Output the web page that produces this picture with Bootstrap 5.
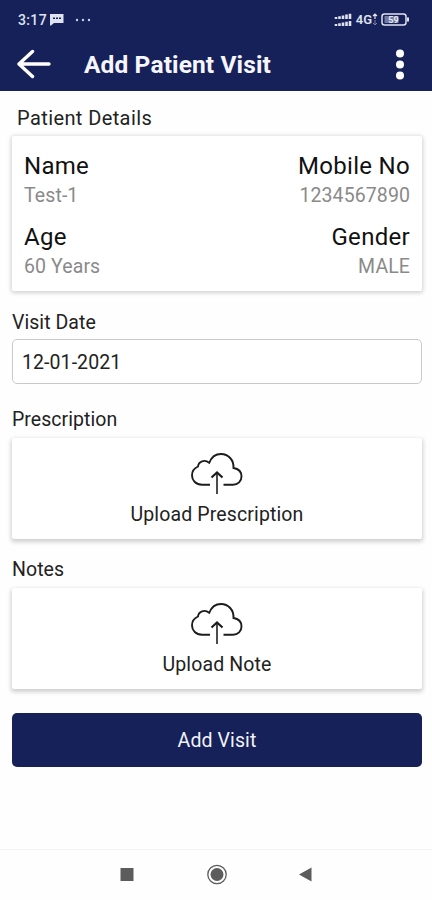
<!DOCTYPE html>
<html lang="en">
<head>
<meta charset="utf-8">
<meta name="viewport" content="width=device-width, initial-scale=1">
<title>Add Patient Visit</title>
<link href="https://cdn.jsdelivr.net/npm/bootstrap@5.3.0/dist/css/bootstrap.min.css" rel="stylesheet">
<style>
:root { --navy: #162159; }
body { font-family: Roboto, "Noto Sans", sans-serif; background: #fefefe; color: #222; font-size: 20px; line-height: 24px; }
.screen { width: 432px; height: 900px; }
.top-area { background: var(--navy); height: 91px; }
.status-row { height: 39px; padding: 0 22px 0 18px; }
.clock { font-size: 14px; font-weight: 500; line-height: 16px; letter-spacing: .35px; color: #dfe2ef; }
.notice { margin-left: 3px; }
.dots { margin-left: 11px; }
.battery { margin-left: 3px; }
.net { font-size: 13px; font-weight: 600; line-height: 16px; color: #dfe2ef; }
.app-row { height: 52px; padding: 0 28px 2px 17px; }
.app-title { font-size: 24.5px; font-weight: 700; line-height: 28px; letter-spacing: .12px; margin-left: 33px; padding-top: 1px; color: #f6f6fa; }
.icon-btn { line-height: 0; }
.content { padding: 15px 10px 0 12px; }
.section-label { font-size: 19.5px; letter-spacing: .05px; }
.details-label { font-size: 20px; letter-spacing: .4px; padding-left: 5px; }
.date-label { margin-top: 20px; }
.upload-label { margin-top: 24px; }
.notes-label { margin-top: 19px; }
.panel { background: #fff; box-shadow: 0 2px 4px 1px rgba(0,0,0,.19); border-radius: 2px; }
.details { height: 155px; padding: 15px 12px 0 12px; margin-top: 6px; box-shadow: 0 1px 4px 1px rgba(0,0,0,.18); }
.term { font-size: 24px; line-height: 30px; letter-spacing: .3px; color: #111; }
.desc { font-size: 19.5px; line-height: 29px; letter-spacing: .1px; color: #8a8a8a; }
.details .second { margin-top: 12px; }
.date-input.form-control { height: 45px; border: 1px solid #c9c9c9; border-radius: 5px; font-size: 19.5px; line-height: 24px; letter-spacing: .08px; padding: 2px 9px 0; color: #222; background: #fff; margin-top: 4px; }
.upload { height: 101px; padding-top: 14px; margin-top: 6px; font-size: 19.5px; letter-spacing: .13px; color: #222; }
.upload-text { margin-top: 7px; }
.submit.btn { height: 54px; background: var(--navy); color: #f1f2f8; border: 0; border-radius: 5px; font-size: 19.5px; letter-spacing: .1px; margin-top: 24px; padding-top: 8px; }
.nav-row { height: 51px; border-top: 1px solid #f3f3f3; }
</style>
</head>
<body>
<div class="screen d-flex flex-column overflow-hidden">
  <header class="top-area flex-shrink-0">
    <div class="status-row d-flex align-items-center justify-content-between">
      <div class="d-flex align-items-center">
        <span class="clock">3:17</span>
        <svg class="notice" width="14" height="13" viewBox="0 0 14 13"><path d="M0 1h13.500v9H4l-3 2.500H0z" fill="#dfe2ef"/><path d="M3 5.200h8" stroke="#162159" stroke-width="1.500" stroke-dasharray="2 1"/></svg>
        <svg class="dots" width="16" height="4" viewBox="0 0 16 4" fill="#cdd1e4"><circle cx="2" cy="2" r="1.200"/><circle cx="8" cy="2" r="1.200"/><circle cx="14" cy="2" r="1.200"/></svg>
      </div>
      <div class="d-flex align-items-center">
        <svg width="18" height="14" viewBox="0 0 18 14" stroke="#dfe2ef" stroke-width="2.600" fill="none"><path d="M2 6V4M5.500 6V3.200M9 6V2.400M12.500 6V1.500M16 6V.8M2 13v-2M5.500 13v-2.800M9 13V9.500M12.500 13V8.800M16 13V8"/></svg>
        <span class="net ms-1">4G</span>
        <svg width="6" height="13" viewBox="0 0 6 13"><path d="M3 1v5M1 3l2-2 2 2" stroke="#dfe2ef" stroke-width="1.200" fill="none"/><path d="M3 7v5M1 10l2 2 2-2" stroke="#7a82aa" fill="none"/></svg>
        <svg class="battery" width="29" height="13" viewBox="0 0 29 13"><rect x="1" y="1" width="24" height="11" rx="2.500" stroke="#dfe2ef" stroke-width="1.500" fill="none"/><rect x="3.500" y="3" width="14" height="7" fill="#717aa5"/><path d="M27 4.500v4" stroke="#dfe2ef" stroke-width="2"/><text x="12.500" y="9.800" font-size="9" font-weight="700" text-anchor="middle" fill="#e8eaf3">59</text></svg>
      </div>
    </div>
    <div class="app-row d-flex align-items-center">
      <a class="icon-btn" href="#" aria-label="Back"><svg width="34" height="30" viewBox="0 0 34 30" fill="none" stroke="#fff" stroke-width="3.400" stroke-linecap="round" stroke-linejoin="round"><path d="M15.500 2.500 2 15l13.500 12.500M2.500 15H32"/></svg></a>
      <h1 class="app-title mb-0">Add Patient Visit</h1>
      <a class="icon-btn ms-auto" href="#" aria-label="More"><svg width="8" height="32" viewBox="0 0 8 32" fill="#fff"><circle cx="4" cy="5.500" r="4"/><circle cx="4" cy="16.500" r="4"/><circle cx="4" cy="27.500" r="4"/></svg></a>
    </div>
  </header>

  <main class="content flex-grow-1">
    <div class="section-label details-label">Patient Details</div>
    <section class="panel details">
      <div class="d-flex justify-content-between">
        <div><div class="term">Name</div><div class="desc">Test-1</div></div>
        <div class="text-end"><div class="term">Mobile No</div><div class="desc">1234567890</div></div>
      </div>
      <div class="second d-flex justify-content-between">
        <div><div class="term">Age</div><div class="desc">60 Years</div></div>
        <div class="text-end"><div class="term">Gender</div><div class="desc">MALE</div></div>
      </div>
    </section>

    <label class="section-label d-block date-label" for="visitDate">Visit Date</label>
    <input class="form-control date-input" id="visitDate" type="text" value="12-01-2021">

    <div class="section-label upload-label">Prescription</div>
    <div class="panel upload d-flex flex-column align-items-center">
      <svg width="54" height="44" viewBox="0 0 54 44" fill="none" stroke="#1c1c1c" stroke-width="1.900"><path d="M20 32.700H12C6 32.700 2 28.500 2 23.500c0-4.500 2.500-7.500 6-9C8.500 9.500 14.500 7 19.200 10.800 21.500 5 25.500 2 31 2c7.300 0 13 6 12.500 14 5 .8 8 4.200 8 8.500 0 4.700-3.500 8.200-8.500 8.200H33.500"/><path d="M27 42V21" stroke="#444"/><path d="M21.500 25.500l5.500-5 5.500 5" stroke-width="2.200"/></svg>
      <span class="upload-text">Upload Prescription</span>
    </div>

    <div class="section-label notes-label">Notes</div>
    <div class="panel upload d-flex flex-column align-items-center">
      <svg width="54" height="44" viewBox="0 0 54 44" fill="none" stroke="#1c1c1c" stroke-width="1.900"><path d="M20 32.700H12C6 32.700 2 28.500 2 23.500c0-4.500 2.500-7.500 6-9C8.500 9.500 14.500 7 19.200 10.800 21.500 5 25.500 2 31 2c7.300 0 13 6 12.500 14 5 .8 8 4.200 8 8.500 0 4.700-3.500 8.200-8.500 8.200H33.500"/><path d="M27 42V21" stroke="#444"/><path d="M21.500 25.500l5.500-5 5.500 5" stroke-width="2.200"/></svg>
      <span class="upload-text">Upload Note</span>
    </div>

    <button class="btn submit w-100" type="button">Add Visit</button>
  </main>

  <nav class="nav-row flex-shrink-0 d-flex align-items-center justify-content-center">
    <svg width="194" height="22" viewBox="0 0 194 22" fill="#5c5c5c"><rect x="1.500" y="4" width="13" height="13"/><circle cx="98" cy="10.500" r="6.500"/><circle cx="98" cy="10.500" r="9.200" fill="none" stroke="#5c5c5c" stroke-width="1.300"/><path d="M180 10.500l12.500-7v14z"/></svg>
  </nav>
</div>
<script src="https://cdn.jsdelivr.net/npm/bootstrap@5.3.0/dist/js/bootstrap.bundle.min.js"></script>
</body>
</html>
